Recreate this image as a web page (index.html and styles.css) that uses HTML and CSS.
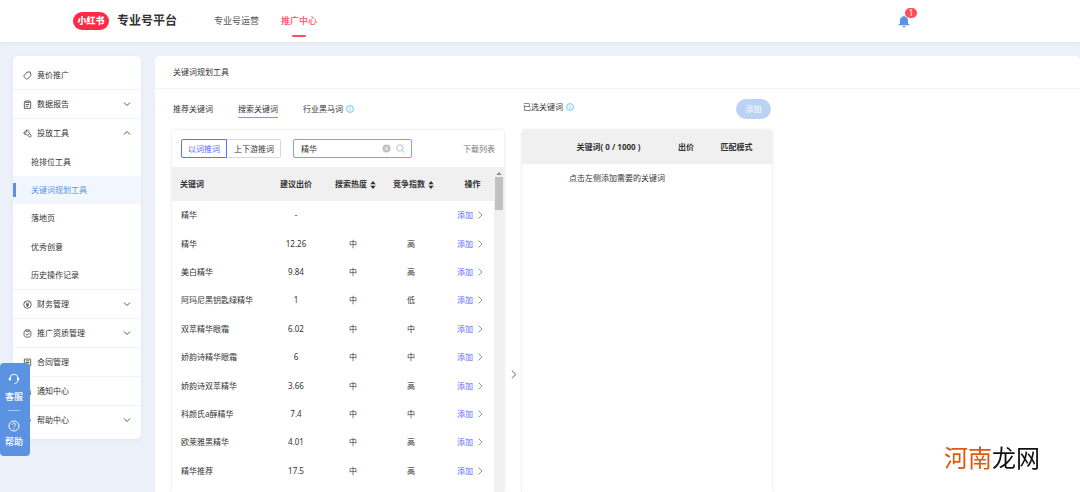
FILE: index.html
```html
<!DOCTYPE html>
<html lang="zh-CN">
<head>
<meta charset="utf-8">
<meta name="viewport" content="width=device-width, initial-scale=1">
<title>专业号平台</title>
<link rel="stylesheet" href="styles.css">
</head>
<body>
<svg class="sprite" aria-hidden="true">
  <symbol id="down" viewBox="0 0 8 8"><path d="M1 2.5 4 5.5 7 2.5"/></symbol>
  <symbol id="up" viewBox="0 0 8 8"><path d="M1 5.5 4 2.5 7 5.5"/></symbol>
  <symbol id="right" viewBox="0 0 8 8"><path d="M2.5 .5 6 4 2.5 7.5"/></symbol>
  <symbol id="info" viewBox="0 0 8 8"><circle cx="4" cy="4" r="3.4"/><path d="M4 3.6v2.3M4 2v.8"/></symbol>
  <symbol id="sort" viewBox="0 0 6 8"><path d="M3 0 5.7 3.2H.3zM3 8 .3 4.8h5.4z"/></symbol>
</svg>

<header class="topbar">
  <a class="brand" href="#"><span class="logo">小红书</span><span class="brand-name">专业号平台</span></a>
  <nav class="topnav">
    <a href="#">专业号运营</a>
    <a href="#" class="active">推广中心</a>
  </nav>
  <button class="bell" aria-label="通知">
    <svg viewBox="0 0 12 13"><path d="M6 .5c.6 0 .8.4.8.9C9 1.8 10 3.400 10 5.400V8.600L11.600 9.800V10.300H.4V9.800L2 8.600V5.400C2 3.400 3 1.800 5.200 1.400 5.200.9 5.400.5 6 .5zM4.700 11h2.600c0 .9-.6 1.400-1.300 1.400S4.700 11.900 4.700 11z"/></svg>
    <span class="badge">1</span>
  </button>
</header>

<div class="layout">
  <aside class="sidebar">
    <a class="item" href="#"><svg class="ic" viewBox="0 0 10 10"><path d="M4.300 1.300 8 1l.9 3.700-3.800 4.200c-.4.400-.9.400-1.300 0L1.200 6.500c-.4-.4-.4-.9 0-1.300z"/></svg>竟价推广</a>
    <a class="item" href="#"><svg class="ic" viewBox="0 0 10 10"><path d="M3 1.800H1.500V9.300h7V1.800H7M3 1h4v1.800H3zM3 5h4M3 7h3"/></svg>数据报告<svg class="arrow"><use href="#down"/></svg></a>
    <a class="item open" href="#"><svg class="ic" viewBox="0 0 10 10"><path d="M1 4.300 2.600 4.500 4.200 3.200 3.800 1.200C5.600.8 7 2.200 6.600 4L9 7.200C9.400 8.500 8.200 9.400 7.200 8.800L4.300 6.200C2.600 6.700 1 5.800 1 4.300zM3.800 1.200 1 4.300M6 6.200 7.500 5"/></svg>投放工具<svg class="arrow"><use href="#up"/></svg></a>
    <nav class="sub">
      <a href="#">抢排位工具</a>
      <a href="#" class="current">关键词规划工具</a>
      <a href="#">落地页</a>
      <a href="#">优秀创意</a>
      <a href="#">历史操作记录</a>
    </nav>
    <a class="item" href="#"><svg class="ic" viewBox="0 0 10 10"><circle cx="5" cy="5" r="4.200"/><path d="M3.300 2.600 5 4.800 6.700 2.600M5 4.800V7.700M3.500 5h3M3.500 6.400h3"/></svg>财务管理<svg class="arrow"><use href="#down"/></svg></a>
    <a class="item" href="#"><svg class="ic" viewBox="0 0 10 10"><path d="M3 1.500C1.800 1.800 1.200 2.500 1.200 4v2.500c0 1.600 1 2.500 2.600 2.500h2.400c1.600 0 2.600-.9 2.600-2.500V4C8.800 2.500 8.200 1.800 7 1.500M3 1h4v1.500H3zM3.200 5.500 4.600 6.900 7.200 4.300"/></svg>推广资质管理<svg class="arrow"><use href="#down"/></svg></a>
    <a class="item" href="#"><svg class="ic" viewBox="0 0 10 10"><path d="M1.500 1.200h7v7.600h-7zM3 3.200h4M3 5h4M4 7h2"/></svg>合同管理</a>
    <a class="item" href="#"><svg class="ic" viewBox="0 0 10 10"><path d="M2 8V4.500a3 3 0 0 1 6 0V8zM1 8h8M4 9.300h2"/></svg>通知中心</a>
    <a class="item" href="#"><svg class="ic" viewBox="0 0 10 10"><path d="M1 2.500h5L8.800 5 6 7.500H1z"/></svg>帮助中心<svg class="arrow"><use href="#down"/></svg></a>
  </aside>

  <main class="main">
    <h1 class="title">关键词规划工具</h1>
    <div class="columns">
      <section class="left">
        <nav class="tabs">
          <a href="#">推荐关键词</a>
          <a href="#" class="active">搜索关键词</a>
          <a href="#">行业黑马词<svg class="info"><use href="#info"/></svg></a>
        </nav>
        <div class="card">
          <div class="tools">
            <div class="switch"><button class="on">以词推词</button><button>上下游推词</button></div>
            <label class="search">
              <input type="text" value="精华" aria-label="搜索关键词">
              <svg viewBox="0 0 10 10"><circle cx="5" cy="5" r="4.500" fill="#c2c2c2"/><path d="m3.400 3.400 3.200 3.200m0-3.200L3.400 6.600" stroke="#fff"/></svg>
              <svg viewBox="0 0 10 10" fill="none" stroke="#bbb"><circle cx="4.300" cy="4.300" r="3.600"/><path d="m7 7 2.500 2.500"/></svg>
            </label>
            <a class="download" href="#">下载列表</a>
          </div>
          <div class="scroller">
            <table class="words">
              <colgroup><col class="c1"><col class="c2"><col class="c3"><col class="c4"><col class="c5"></colgroup>
              <thead><tr><th>关键词</th><th>建议出价</th><th class="sortable">搜索热度<svg class="sort"><use href="#sort"/></svg></th><th class="sortable">竞争指数<svg class="sort"><use href="#sort"/></svg></th><th>操作</th></tr></thead>
              <tbody>
                <tr><td>精华</td><td>-</td><td></td><td></td><td><a href="#">添加<svg><use href="#right"/></svg></a></td></tr>
                <tr><td>精华</td><td>12.26</td><td>中</td><td>高</td><td><a href="#">添加<svg><use href="#right"/></svg></a></td></tr>
                <tr><td>美白精华</td><td>9.84</td><td>中</td><td>高</td><td><a href="#">添加<svg><use href="#right"/></svg></a></td></tr>
                <tr><td>阿玛尼黑钥匙绿精华</td><td>1</td><td>中</td><td>低</td><td><a href="#">添加<svg><use href="#right"/></svg></a></td></tr>
                <tr><td>双萃精华眼霜</td><td>6.02</td><td>中</td><td>中</td><td><a href="#">添加<svg><use href="#right"/></svg></a></td></tr>
                <tr><td>娇韵诗精华眼霜</td><td>6</td><td>中</td><td>中</td><td><a href="#">添加<svg><use href="#right"/></svg></a></td></tr>
                <tr><td>娇韵诗双萃精华</td><td>3.66</td><td>中</td><td>高</td><td><a href="#">添加<svg><use href="#right"/></svg></a></td></tr>
                <tr><td>科颜氏a醇精华</td><td>7.4</td><td>中</td><td>中</td><td><a href="#">添加<svg><use href="#right"/></svg></a></td></tr>
                <tr><td>欧莱雅黑精华</td><td>4.01</td><td>中</td><td>高</td><td><a href="#">添加<svg><use href="#right"/></svg></a></td></tr>
                <tr><td>精华推荐</td><td>17.5</td><td>中</td><td>高</td><td><a href="#">添加<svg><use href="#right"/></svg></a></td></tr>
              </tbody>
            </table>
            <div class="track"><svg viewBox="0 0 8 8"><path d="M4 3 6.500 6h-5z"/></svg><div class="thumb"></div></div>
          </div>
        </div>
      </section>

      <button class="fold" aria-label="展开"><svg><use href="#right"/></svg></button>

      <section class="right">
        <div class="picked"><h2>已选关键词<svg class="info"><use href="#info"/></svg></h2><button class="add">添加</button></div>
        <div class="card">
          <table class="chosen">
            <colgroup><col class="k1"><col class="k2"><col class="k3"></colgroup>
            <thead><tr><th>关键词( 0 / 1000 )</th><th>出价</th><th>匹配模式</th></tr></thead>
          </table>
          <p class="empty">点击左侧添加需要的关键词</p>
        </div>
      </section>
    </div>
  </main>
</div>

<aside class="helper">
  <a href="#"><svg viewBox="0 0 12 12"><path d="M2.200 7.500V5a3.800 3.800 0 0 1 7.600 0v2.500M9.800 7.500C9.600 9.500 8.300 10.500 6.300 10.700"/><path d="M1.800 4.800v2.400M10.200 4.800v2.400" stroke-width="2"/></svg>客服</a>
  <hr>
  <a href="#"><svg viewBox="0 0 12 12"><circle cx="6" cy="6" r="5"/><path d="M4.400 4.900C4.400 2.700 7.600 2.800 7.600 4.700 7.600 5.900 6 5.900 6 7.200M6 8.200v.9"/></svg>帮助</a>
</aside>
<div class="watermark"><span>河南</span>龙网</div>
</body>
</html>
```
FILE: styles.css
```css
* { box-sizing: border-box; }

body {
  margin: 0;
  height: 100vh;
  overflow: hidden;
  display: flex;
  flex-direction: column;
  background: #ecf0f9;
  color: #333;
  font: 8px/16px "Noto Sans", "Noto Sans CJK SC", sans-serif;
}

a { color: inherit; text-decoration: none; }
button, input { font: inherit; color: inherit; padding: 0; border: 0; background: none; }
h1, h2, p { margin: 0; font-size: 8px; font-weight: 400; }
svg { fill: none; flex: none; }
.sprite { position: absolute; width: 0; height: 0; }

.topbar {
  height: 42px;
  flex: none;
  display: flex;
  align-items: center;
  padding: 0 170px 0 73px;
  background: #fff;
  box-shadow: 0 1px 3px #dfe4ef;
}
.brand { display: flex; align-items: center; gap: 8px; }
.logo {
  width: 36px;
  line-height: 18px;
  border-radius: 9px;
  background: #fe2a46;
  color: #fff;
  font-size: 9px;
  font-weight: 900;
  text-align: center;
}
.brand-name { font-size: 12px; font-weight: 700; }
.topnav { display: flex; align-self: stretch; gap: 22px; margin-left: 37px; font-size: 9px; }
.topnav a { display: flex; flex-direction: column; align-items: center; line-height: 42px; color: #555; }
.topnav .active { color: #ff4d5f; font-weight: 500; }
.topnav .active::after { content: ""; width: 14px; height: 2px; margin-top: -7px; border-radius: 1px; background: #ff4d5f; }
.bell { position: relative; width: 12px; height: 13px; margin-left: auto; }
.bell svg { display: block; width: 12px; height: 13px; fill: #5b92e1; }
.badge {
  position: absolute;
  left: 7px;
  top: -7px;
  width: 12px;
  border-radius: 5px;
  background: #ff4d5a;
  color: #fff;
  line-height: 10px;
}

.layout { flex: 1; min-height: 0; display: flex; align-items: flex-start; gap: 14px; padding: 14px 0 0 13px; }

.sidebar { width: 128px; flex: none; padding: 5px 0 4px; border-radius: 5px; background: #fff; box-shadow: 0 1px 3px #e0e5f0; }
.item { height: 29px; display: flex; align-items: center; padding: 0 10px; border-bottom: 1px solid #f1f2f5; }
.item.open, .item:last-child { border-bottom-color: transparent; }
.ic { width: 9px; height: 9px; margin-right: 5px; stroke: #555; }
.arrow { width: 8px; height: 8px; margin-left: auto; stroke: #555; }
.sub { height: 142px; display: grid; grid-template-rows: repeat(5, 1fr); border-bottom: 1px solid #f1f2f5; }
.sub a { display: flex; align-items: center; padding-left: 18px; }
.sub .current { padding-left: 0; background: #f2f6fe; color: #5b92e1; }
.current::before { content: ""; width: 3px; height: 14px; margin-right: 15px; background: #5b92e1; }

.main { flex: 1; min-width: 0; align-self: stretch; display: flex; flex-direction: column; border-radius: 5px 5px 0 0; background: #fff; }
.title { line-height: 32px; padding-left: 18px; border-bottom: 1px solid #f1f2f4; }
.columns { flex: 1; min-height: 0; display: grid; grid-template-columns: minmax(0, 332px) 18px minmax(0, 250px); padding-left: 17px; }
.left, .right { display: flex; flex-direction: column; min-height: 0; }
.card { flex: 1; min-height: 0; display: flex; flex-direction: column; overflow: hidden; border-radius: 3px 3px 0 0; box-shadow: 0 0 3px #dcdcdc; }

.tabs { height: 41px; flex: none; display: flex; align-items: flex-start; gap: 25px; padding: 12px 0 0 1px; }
.tabs a { display: flex; align-items: center; border-bottom: 1px solid transparent; }
.tabs .active { border-bottom-color: #6f9fec; }
.info { width: 8px; height: 8px; margin-left: 3px; stroke: #6cc7f5; }

.tools { height: 37px; flex: none; display: flex; align-items: center; padding: 0 9px; }
.switch { display: flex; }
.switch button { height: 19px; padding: 0 6px 0 7px; border: 1px solid #d9d9d9; border-left: 0; border-radius: 0 2px 2px 0; }
.switch .on { padding: 0 6px; border: 1px solid #5a75f0; border-radius: 2px 0 0 2px; color: #5468ff; }
.search { width: 119px; height: 19px; margin-left: 12px; display: flex; align-items: center; gap: 5px; padding: 0 6px 0 7px; border: 1px solid #7aa5e6; border-radius: 2px; }
.search input { flex: 1; min-width: 0; outline: 0; }
.search svg { width: 9px; height: 9px; }
.download { margin-left: auto; color: #777; }

.scroller { flex: 1; min-height: 0; display: flex; align-items: flex-start; overflow: hidden; }
table { border-collapse: collapse; table-layout: fixed; }
th, td { padding: 0; text-align: center; }
th { height: 34px; background: #f0f0f0; font-weight: 700; }
.words { flex: 1; height: 318px; }
.words th:first-child { text-align: left; padding-left: 8px; }
.words td:first-child { text-align: left; padding-left: 9px; white-space: nowrap; }
.words th:last-child { padding-left: 10px; }
.words td:last-child { padding-left: 6px; }
.words td a { display: flex; align-items: center; justify-content: center; gap: 3px; color: #5468ff; }
.words td svg { width: 8px; height: 8px; stroke: #999; }
.words .sortable { padding-left: 5px; white-space: nowrap; }
.sort { width: 6px; height: 8px; margin-left: 3px; fill: #333; vertical-align: middle; }
.c1 { width: 95px; }
.c2 { width: 58px; }
.c3 { width: 56px; }
.c4 { width: 60px; }
.c5 { width: 53px; }
.track { width: 10px; align-self: stretch; padding: 2px 1px; background: #f0f0f0; }
.track svg { display: block; width: 8px; height: 8px; fill: #888; }
.thumb { height: 33px; background: #c1c1c1; }

.fold { align-self: start; margin-top: 279px; height: 16px; }
.fold svg { width: 9px; height: 9px; stroke: #999; }

.picked { height: 41px; flex: none; display: flex; align-items: flex-start; justify-content: space-between; padding: 10px 1px 0; }
.picked h2 { display: flex; align-items: center; }
.add { width: 35px; height: 20px; border-radius: 10px; background: #bcd2f4; color: #fff; }
.chosen { width: 100%; }
.chosen th:first-child { padding-left: 26px; }
.chosen th:last-child { padding-right: 2px; }
.k1 { width: 147px; }
.k2 { width: 34px; }
.empty { padding: 6px 60px 0 0; text-align: center; }

.helper {
  position: fixed;
  left: 0;
  top: 363px;
  width: 30px;
  padding: 10px 2px 8px 0;
  border-radius: 4px;
  background: #5b92e1;
  color: #fff;
  font-size: 9px;
  font-weight: 500;
}
.helper a { display: flex; flex-direction: column; align-items: center; gap: 6px; line-height: 12px; }
.helper hr { width: 12px; margin: 7px auto 9px; border: 0; border-top: 1px solid #a9c6f1; }
.helper hr + a { gap: 4px; }
.helper svg { width: 12px; height: 12px; stroke: #fff; }

.watermark { position: fixed; right: 40px; bottom: 18px; font-size: 24px; line-height: 32px; color: #111; }
.watermark span { color: #e2560f; }
```
